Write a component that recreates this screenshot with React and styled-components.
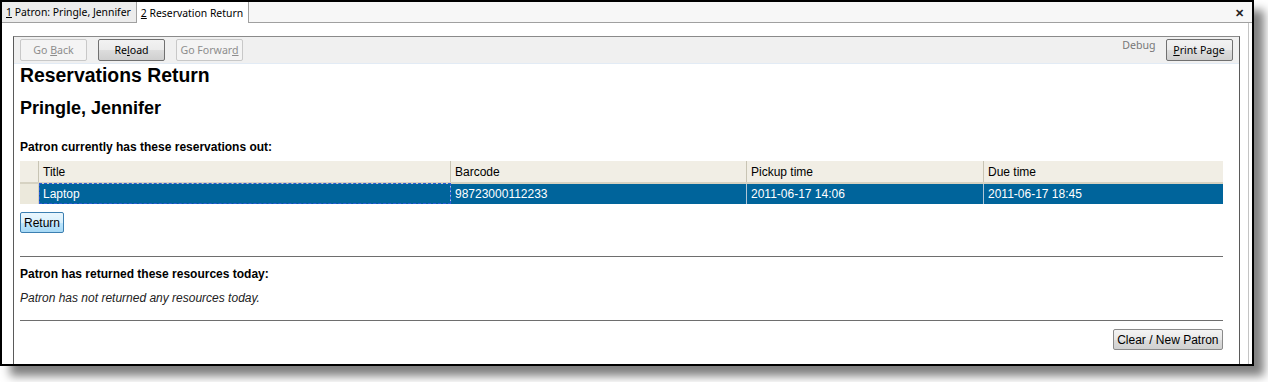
import React from 'react';
import styled, { createGlobalStyle } from 'styled-components';

const columns = [
  { key: 'title', label: 'Title', width: 412 },
  { key: 'barcode', label: 'Barcode', width: 296 },
  { key: 'pickup', label: 'Pickup time', width: 237 },
  { key: 'due', label: 'Due time', width: 239 },
];

const rows = [
  { title: 'Laptop', barcode: '98723000112233', pickup: '2011-06-17 14:06', due: '2011-06-17 18:45' },
];

const App = () => {
  return (
    <>
      <GlobalStyle />
      <Page>
        <Frame>
          <TabBar>
            <Tab><span><u>1</u> Patron: Pringle, Jennifer</span></Tab>
            <Tab active><span><u>2</u> Reservation Return</span></Tab>
            <Spacer />
            <CloseX>✕</CloseX>
          </TabBar>
          <TabBody>
            <Panel>
              <Toolbar>
                <ToolButton disabled><span>Go <u>B</u>ack</span></ToolButton>
                <ToolButton><span>Re<u>l</u>oad</span></ToolButton>
                <ToolButton disabled><span>Go Forwar<u>d</u></span></ToolButton>
                <Spacer />
                <DebugLabel>Debug</DebugLabel>
                <ToolButton><span><u>P</u>rint Page</span></ToolButton>
              </Toolbar>
              <Content>
                <Title>Reservations Return</Title>
                <PatronName>Pringle, Jennifer</PatronName>
                <SectionLabel>Patron currently has these reservations out:</SectionLabel>
                <Grid>
                  <thead>
                    <tr>
                      <CornerCell />
                      {columns.map((c) => (
                        <HeadCell key={c.key} style={{ width: c.width }}>{c.label}</HeadCell>
                      ))}
                    </tr>
                  </thead>
                  <tbody>
                    {rows.map((r, i) => (
                      <tr key={i}>
                        <RowHeadCell />
                        {columns.map((c, j) => (
                          <DataCell key={c.key} focused={j === 0}>{r[c.key]}</DataCell>
                        ))}
                      </tr>
                    ))}
                  </tbody>
                </Grid>
                <ReturnButton>Return</ReturnButton>
                <Rule />
                <SectionLabel tight>Patron has returned these resources today:</SectionLabel>
                <EmptyNote>Patron has not returned any resources today.</EmptyNote>
                <Rule close />
                <Footer>
                  <PlainButton>Clear / New Patron</PlainButton>
                </Footer>
              </Content>
            </Panel>
          </TabBody>
        </Frame>
      </Page>
    </>
  );
};

export default App;

const GlobalStyle = createGlobalStyle`
  body {
    margin: 0;
    padding: 0;
    background: #fff;
    font-family: "Liberation Sans", Arial, sans-serif;
    overflow: hidden;
  }
`;

const Page = styled.div`
  width: 1268px;
  height: 382px;
  background: #fff;
`;

const Frame = styled.div`
  width: 1250px;
  height: 362px;
  border: 2px solid #000;
  background: #fff;
  box-shadow: 10px 10px 9px rgba(0, 0, 0, 0.5);
  display: flex;
  flex-direction: column;
`;

const TabBar = styled.div`
  height: 20px;
  display: flex;
  align-items: stretch;
  background: #f7f7f7;
  border-bottom: 1px solid #a0a0a0;
  font-family: "Noto Sans", "Open Sans", sans-serif;
  font-size: 10.4px;
`;

const Tab = styled.div`
  display: flex;
  align-items: center;
  padding: 0 5px 0 4px;
  background: ${({ active }) => (active ? '#fff' : '#ececec')};
  border-right: 1px solid #a0a0a0;
  color: #000;
  margin-bottom: ${({ active }) => (active ? '-1px' : '0')};
`;

const Spacer = styled.div`
  flex: 1;
`;

const CloseX = styled.div`
  display: flex;
  align-items: center;
  padding-right: 8px;
  font-size: 11px;
  font-weight: bold;
  color: #222;
`;

const TabBody = styled.div`
  flex: 1;
  display: flex;
  padding: 13px 9px 0 11px;
  border-right: 1px solid #c4c4c4;
  margin-right: 3px;
  min-height: 0;
`;

const Panel = styled.div`
  flex: 1;
  border-left: 1px solid #5a5a5a;
  border-top: 1px solid #8a8a8a;
  border-right: 1px solid #5a5a5a;
  display: flex;
  flex-direction: column;
  min-height: 0;
`;

const Toolbar = styled.div`
  height: 26px;
  display: flex;
  align-items: center;
  gap: 11px;
  padding: 0 6px 0 6px;
  background: #f0f0f0;
  border-bottom: 1px solid #e2ebf5;
  font-family: "Noto Sans", "Open Sans", sans-serif;
  font-size: 10.6px;
`;

const ToolButton = styled.div`
  height: 22px;
  width: 67px;
  display: flex;
  align-items: center;
  justify-content: center;
  box-sizing: border-box;
  border: 1px solid ${({ disabled }) => (disabled ? '#c8c8c8' : '#707070')};
  border-radius: 2px;
  color: ${({ disabled }) => (disabled ? '#8d8d8d' : '#000')};
  background: ${({ disabled }) =>
    disabled ? '#f4f4f4' : 'linear-gradient(#f2f2f2, #ebebeb 50%, #dddddd 51%, #cfcfcf)'};
`;

const DebugLabel = styled.span`
  color: #777;
  margin-right: -1px;
  align-self: flex-start;
  margin-top: 1px;
`;

const Content = styled.div`
  padding: 0 16px 0 6px;
  color: #000;
`;

const Title = styled.h1`
  margin: 0;
  font-size: 19.4px;
  line-height: 22px;
  font-weight: bold;
`;

const PatronName = styled.h2`
  margin: 11px 0 0;
  font-size: 18px;
  line-height: 22px;
  font-weight: bold;
`;

const SectionLabel = styled.div`
  margin: ${({ tight }) => (tight ? '10px 0 0' : '21px 0 0')};
  font-size: 12px;
  line-height: 14px;
  font-weight: bold;
`;

const Grid = styled.table`
  margin-top: 7px;
  width: 100%;
  border-collapse: collapse;
  table-layout: fixed;
  font-size: 12px;
`;

const CornerCell = styled.th`
  width: 18px;
  height: 21px;
  padding: 0;
  background: #f1eee5;
  border-bottom: 2px solid #d6d2c2;
`;

const HeadCell = styled.th`
  height: 21px;
  padding: 0 4px;
  text-align: left;
  font-weight: normal;
  background: #f1eee5;
  border-left: 1px solid #c8c4b4;
  border-bottom: 2px solid #d6d2c2;
  box-sizing: border-box;
`;

const RowHeadCell = styled.td`
  height: 20px;
  padding: 0;
  background: #ece9dc;
  border-right: 1px solid #d6d2c2;
`;

const DataCell = styled.td`
  height: 20px;
  padding: 0 4px;
  background: #00649b;
  color: #fff;
  border-left: 1px solid ${({ focused }) => (focused ? '#0000ff' : '#b0c6d6')};
  outline: ${({ focused }) => (focused ? '1px dashed #2a5bd8' : 'none')};
  outline-offset: -1px;
  box-sizing: border-box;
`;

const ReturnButton = styled.div`
  display: inline-flex;
  align-items: center;
  margin-top: 8px;
  height: 21px;
  box-sizing: border-box;
  padding: 0 3px;
  font-size: 12px;
  border: 1px solid #3c7fb1;
  border-radius: 2px;
  background: linear-gradient(#eaf6fd, #d9f0fc 50%, #bee6fd 51%, #a7d9f5);
`;

const Rule = styled.hr`
  margin: ${({ close }) => (close ? '15px 0 0' : '23px 0 0')};
  border: 0;
  border-top: 1px solid #6e6e6e;
  height: 0;
`;

const EmptyNote = styled.div`
  margin-top: 10px;
  font-size: 12px;
  font-style: italic;
  color: #222;
`;

const Footer = styled.div`
  display: flex;
  justify-content: flex-end;
  margin-top: 8px;
`;

const PlainButton = styled.div`
  height: 21px;
  box-sizing: border-box;
  display: flex;
  align-items: center;
  padding: 0 3px;
  font-size: 12px;
  border: 1px solid #8a8a8a;
  border-radius: 2px;
  background: linear-gradient(#f4f4f4, #e8e8e8 50%, #dcdcdc 51%, #d0d0d0);
`;
